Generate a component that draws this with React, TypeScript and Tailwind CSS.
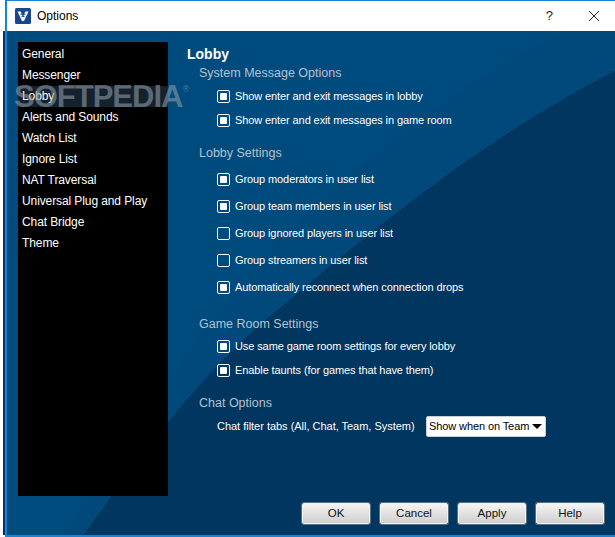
const FONT = "font-['Liberation_Sans',sans-serif]";

const navItems = [
  'General',
  'Messenger',
  'Lobby',
  'Alerts and Sounds',
  'Watch List',
  'Ignore List',
  'NAT Traversal',
  'Universal Plug and Play',
  'Chat Bridge',
  'Theme',
];

const Check = ({ label, checked, className }: { label: string; checked: boolean; className: string }) => (
  <div className={`flex items-center h-4 pl-[18px] ${className}`}>
    <span className="w-[13px] h-[13px] rounded-[2px] border border-white flex items-center justify-center shrink-0">
      {checked && <span className="w-[7px] h-[7px] rounded-[1px] bg-white" />}
    </span>
    <span className="ml-[5px] text-[11px] leading-4 tracking-[-0.1px] text-white whitespace-nowrap">{label}</span>
  </div>
);

const SectionTitle = ({ text, className }: { text: string; className: string }) => (
  <div className={`h-4 text-[12.5px] leading-4 text-[#b4c2cf] whitespace-nowrap ${className}`}>{text}</div>
);

const DialogButton = ({ text }: { text: string }) => (
  <button className="w-[68px] h-[21px] rounded-[2px] border border-[#f2f2f2] bg-gradient-to-b from-[#f4f4f4] to-[#cfcfcf] text-[11.5px] text-[#111] shadow-[0_0_0_1px_#5a6f80]">
    {text}
  </button>
);

export default function App() {
  return (
    <div className={`w-[615px] h-[537px] bg-white flex flex-col pl-[5px] overflow-hidden relative ${FONT}`}>
      <div className="h-px bg-[#1883d7]" />
      <div className="h-[30px] flex items-center pl-[8px] border-l-2 border-[#1883d7] bg-white shrink-0">
        <svg width="16" height="16" viewBox="0 0 16 16" className="shrink-0">
          <rect width="16" height="16" rx="1.5" fill="#17488f" />
          <path d="M2.5 3.5h3.2L8 9l2.3-5.5h3.2L9 13H7z" fill="#fff" />
          <path d="M5.5 6.2h5M6.5 8.4h3" stroke="#17488f" strokeWidth="1" />
        </svg>
        <span className="ml-[6px] text-[12px] text-black">Options</span>
        <span className="ml-auto mr-[35px] text-[13px] text-[#222]">?</span>
        <svg width="12" height="12" viewBox="0 0 12 12" className="mr-[15px]">
          <path d="M1 1l10 10M11 1L1 11" stroke="#222" strokeWidth="1" fill="none" />
        </svg>
      </div>

      <div className="flex-1 flex relative border-l-2 border-[#1883d7] border-b-2 bg-[#004b7d] before:content-[''] before:absolute before:top-0 before:bottom-0 before:-left-[4px] before:w-[2px] before:bg-[#003660]">
        {/* background swoosh */}
        <svg className="absolute inset-0" width="608" height="504" viewBox="0 0 608 504">
          <path d="M58 505C120 400 210 270 313 170C380 110 470 40 560 0H608V505Z" fill="#00497a" />
          <path d="M76 505C140 415 200 335 273 277C370 195 480 105 608 40V505Z" fill="#003660" />
        </svg>

        <div className="relative w-[150px] h-[454px] ml-[11px] mt-[11px] bg-black pt-[1.5px] shrink-0">
          {navItems.map((item) => (
            <div
              key={item}
              className={`h-[21px] pl-1 text-[12px] leading-[21px] tracking-[-0.1px] text-white whitespace-nowrap ${item === 'Lobby' ? 'bg-[#15222e]' : ''}`}
            >
              {item}
            </div>
          ))}
        </div>

        <div className="relative flex-1 pl-[19px] mt-[13px] flex flex-col">
          <div className="h-5 text-[14px] leading-5 font-bold text-white">Lobby</div>
          <SectionTitle text="System Message Options" className="pl-3 mt-[1px]" />
          <Check label="Show enter and exit messages in lobby" checked className="ml-3 mt-[7px]" />
          <Check label="Show enter and exit messages in game room" checked className="ml-3 mt-2" />
          <SectionTitle text="Lobby Settings" className="pl-3 mt-[17px]" />
          <Check label="Group moderators in user list" checked className="ml-3 mt-[10px]" />
          <Check label="Group team members in user list" checked className="ml-3 mt-[11px]" />
          <Check label="Group ignored players in user list" checked={false} className="ml-3 mt-[11px]" />
          <Check label="Group streamers in user list" checked={false} className="ml-3 mt-[11px]" />
          <Check label="Automatically reconnect when connection drops" checked className="ml-3 mt-[11px]" />
          <SectionTitle text="Game Room Settings" className="pl-3 mt-[21px]" />
          <Check label="Use same game room settings for every lobby" checked className="ml-3 mt-[6px]" />
          <Check label="Enable taunts (for games that have them)" checked className="ml-3 mt-2" />
          <SectionTitle text="Chat Options" className="pl-3 mt-[17px]" />
          <div className="flex items-center pl-[30px] mt-[4px] h-[22px]">
            <span className="text-[11px] tracking-[-0.02px] text-white whitespace-nowrap">Chat filter tabs (All, Chat, Team, System)</span>
            <div className="absolute left-[258px] flex items-center w-[120px] h-[21px] rounded-[2px] bg-white border border-[#c8d0d8] pl-[2px] text-[11px] tracking-[-0.1px] text-black whitespace-nowrap">
              Show when on Team
              <span className="ml-auto mr-[3px] w-0 h-0 border-x-[5px] border-x-transparent border-t-[5px] border-t-black" />
            </div>
          </div>
          <div className="flex gap-[10px] mt-auto mb-[11px] ml-[115px]">
            <DialogButton text="OK" />
            <DialogButton text="Cancel" />
            <DialogButton text="Apply" />
            <DialogButton text="Help" />
          </div>
        </div>
      </div>

      {/* watermark */}
      <div className="absolute left-[14px] top-[79px] flex items-start text-[31px] leading-[36px] font-bold tracking-[-1px] text-[#8d9aa5]/60 pointer-events-none">
        SOFTPEDIA
        <span className="text-[9px] leading-[20px] font-normal tracking-normal">®</span>
      </div>
    </div>
  );
}
